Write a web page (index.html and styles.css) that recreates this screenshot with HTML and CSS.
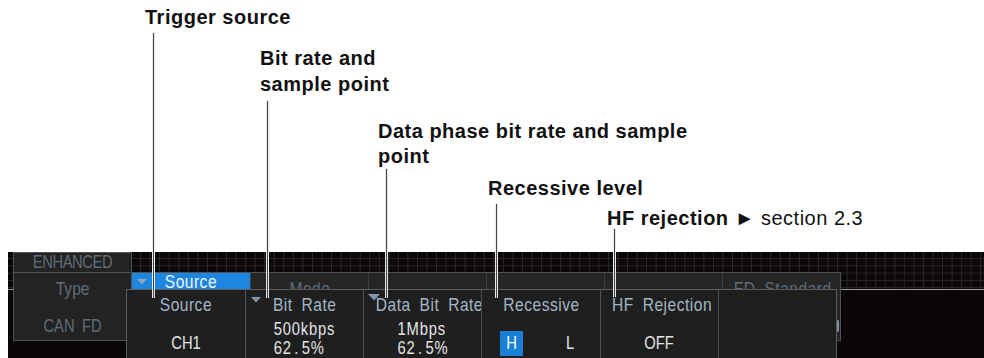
FILE: index.html
```html
<!DOCTYPE html>
<html lang="en">
<head>
    <meta charset="UTF-8">
    <meta name="viewport" content="width=device-width, initial-scale=1.0">
    <title>CAN FD Trigger</title>
    <link rel="stylesheet" href="styles.css">
</head>
<body>
    <div class="figure">
        <div class="notes">
            <p class="note note-trigger">Trigger source</p>
            <p class="note note-bitrate">Bit rate and<br>sample point</p>
            <p class="note note-data">Data phase bit rate and sample<br>point</p>
            <p class="note note-recessive">Recessive level</p>
            <p class="note note-hf">HF rejection <span class="ref">&#9658; section 2.3</span></p>
        </div>

        <div class="screen">
            <div class="trig-panel">
                <div class="enh"><span class="nar">ENHANCED</span></div>
                <div class="trig-type"><span class="nar">Type</span></div>
                <div class="trig-val"><span class="nar">CAN FD</span></div>
            </div>

            <div class="tabs">
                <div class="tab active">
                    <div class="tab-label">
                        <svg class="tri" width="10" height="6" viewBox="0 0 10 6"><polygon points="0,0 10,0 5,5.5"/></svg>
                        <span class="nar">Source</span>
                    </div>
                </div>
                <div class="tab"><div class="tab-label"><span class="nar">Mode</span></div></div>
                <div class="tab"></div>
                <div class="tab"></div>
                <div class="tab"></div>
                <div class="tab"><div class="tab-label"><span class="nar">FD Standard</span></div></div>
            </div>
            <span class="knob"></span>

            <div class="popup">
                <div class="cell">
                    <div class="head"><span class="nar">Source</span></div>
                    <div class="val single"><span class="nar">CH1</span></div>
                </div>
                <div class="cell">
                    <svg class="tri" width="10" height="6" viewBox="0 0 10 6"><polygon points="0,0 10,0 5,5.5"/></svg>
                    <div class="head"><span class="nar">Bit Rate</span></div>
                    <div class="val"><div class="stack nar">500kbps<br>62<span class="dot">.</span>5%</div></div>
                </div>
                <div class="cell">
                    <svg class="tri tri-data" width="12" height="7" viewBox="0 0 12 7"><polygon points="0,0 12,0 6,6.5"/></svg>
                    <div class="head"><span class="nar">Data Bit Rate</span></div>
                    <div class="val"><div class="stack nar">1Mbps<br>62<span class="dot">.</span>5%</div></div>
                </div>
                <div class="cell">
                    <div class="head"><span class="nar">Recessive</span></div>
                    <div class="val single choice">
                        <span class="opt on"><span class="nar">H</span></span>
                        <span class="opt"><span class="nar">L</span></span>
                    </div>
                </div>
                <div class="cell">
                    <div class="head"><span class="nar">HF Rejection</span></div>
                    <div class="val single"><span class="nar">OFF</span></div>
                </div>
                <div class="cell"></div>
            </div>
        </div>

        <!-- leader lines from the notes down to the items -->
        <span class="leader leader-trigger"></span>
        <span class="leader leader-bitrate"></span>
        <span class="leader leader-data"></span>
        <span class="leader leader-recessive"></span>
        <span class="leader leader-hf"></span>
    </div>
</body>
</html>
```

FILE: styles.css
```css
body {
    margin: 0;
    background: #ffffff;
    overflow: hidden;
}
.figure {
    position: relative;
    width: 984px;
    height: 358px;
    overflow: hidden;
}

/* callout notes */
.notes {
    height: 252px;
    padding-top: 4px;
    box-sizing: border-box;
}
.note {
    margin: 0;
    font-family: "Liberation Sans", Arial, sans-serif;
    font-weight: bold;
    font-size: 20px;
    line-height: 26px;
    letter-spacing: 0.5px;
    color: #111;
}
.note-trigger { margin-left: 145px; }
.note-bitrate { margin: 15px 0 0 260px; }
.note-data { margin: 22px 0 0 378px; line-height: 25px; }
.note-recessive { margin: 6px 0 0 488px; }
.note-hf { margin: 4px 0 0 607px; }
.ref { font-weight: normal; }

.leader {
    position: absolute;
    width: 1px;
    background: #444;
    box-shadow: 1px 0 0 #e8e8e8, -1px 0 0 #e8e8e8;
}
.leader-trigger { left: 153px; top: 33px; height: 265px; }
.leader-bitrate { left: 267px; top: 101px; height: 197px; }
.leader-data { left: 386px; top: 169px; height: 129px; }
.leader-recessive { left: 496px; top: 204px; height: 94px; }
.leader-hf { left: 614px; top: 229px; height: 68px; }

/* oscilloscope screen */
.screen {
    position: relative;
    display: flex;
    align-items: flex-start;
    height: 106px;
    margin-left: 8px;
    font-family: "Liberation Sans", Arial, sans-serif;
    background:
        linear-gradient(#9c9c9c, #9c9c9c) 0 37px / 100% 1px no-repeat,
        linear-gradient(#0b0709, #0b0709) 0 38px / 100% 100% no-repeat,
        linear-gradient(to right, #2a2729 1px, transparent 1px) 8px 0 / 9.55px 100%,
        linear-gradient(to bottom, #2a2729 1px, transparent 1px) 0 6px / 100% 7.3px,
        #0c080a;
}
/* the scope font is a narrow one */
.nar {
    display: inline-block;
    transform: scaleX(0.82);
    white-space: nowrap;
}
.trig-panel {
    width: 119px;
    height: 89px;
    margin-left: 5px;
    box-sizing: border-box;
    border: 1px solid #4d5258;
    background: #232323;
    color: #616c77;
    text-align: center;
}
.enh {
    height: 19px;
    line-height: 19px;
    font-size: 18px;
    letter-spacing: -0.5px;
    border-bottom: 1px solid #4d5258;
}
.trig-type {
    line-height: 31px;
    font-size: 19px;
}
.trig-val {
    line-height: 44px;
    font-size: 18px;
    word-spacing: 4px;
}

.tabs {
    display: grid;
    grid-template-columns: repeat(6, minmax(0, 1fr));
    width: 710px;
    height: 69px;
    margin: 20px 0 0 -1px;
    box-sizing: border-box;
    border: 1px solid #4d5258;
    background: #262626;
}
.tab + .tab {
    border-left: 1px solid #3c4146;
}
.tab-label {
    position: relative;
    line-height: 32px;
    font-size: 19px;
    text-align: center;
    color: #5f6a75;
    letter-spacing: 0.6px;
    word-spacing: 5px;
}
.tab.active .tab-label {
    height: 17px;
    line-height: 17px;
    background: #1d86de;
    color: #eef5fb;
}
.tab.active .tri {
    left: 5px;
    top: 6px;
    fill: #8ea6bd;
}
.knob {
    position: absolute;
    left: 829px;
    top: 68px;
    width: 2px;
    height: 12px;
    border-radius: 1px;
    background: #7d8d9b;
}

.popup {
    position: absolute;
    left: 118px;
    top: 37px;
    width: 711px;
    height: 80px;
    box-sizing: border-box;
    display: grid;
    grid-template-columns: repeat(6, minmax(0, 1fr));
    border: 1px solid #575d64;
    background: #1f1f1f;
}
.cell {
    position: relative;
    display: flex;
    flex-direction: column;
    min-width: 0;
}
.cell + .cell {
    border-left: 1px solid #4b5157;
}
.tri {
    position: absolute;
    left: 5px;
    top: 7px;
    fill: #7f98ae;
}
.tri-data {
    left: 4px;
    top: 4px;
}
.head {
    height: 30px;
    line-height: 30px;
    font-size: 19px;
    text-align: center;
    color: #a2b5c4;
    letter-spacing: 0.6px;
    word-spacing: 5px;
}
.val {
    display: flex;
    justify-content: center;
    font-size: 18px;
    color: #e4e4e4;
}
.val.single {
    height: 46px;
    align-items: center;
}
.stack {
    line-height: 19px;
    text-align: left;
    letter-spacing: 1px;
}
.dot {
    display: inline-block;
    width: 12px;
    text-align: center;
}
.choice {
    justify-content: space-around;
}
.opt {
    width: 23px;
    height: 25px;
    line-height: 25px;
    text-align: center;
}
.opt.on {
    background: #1a7fd6;
    color: #ffffff;
}
```
